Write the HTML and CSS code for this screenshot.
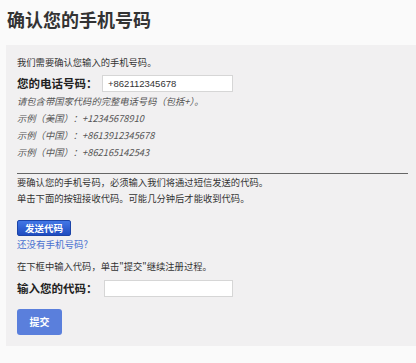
FILE: index.html
```html
<!DOCTYPE html>
<html lang="zh-CN">
<head>
<meta charset="utf-8">
<title>确认您的手机号码</title>
<link rel="stylesheet" href="styles.css">
</head>
<body>
<h1 class="title">确认您的手机号码</h1>
<div class="panel">
  <p class="line first">我们需要确认您输入的手机号码。</p>
  <div class="row">
    <span class="label">您的电话号码：</span>
    <span class="field">+862112345678</span>
  </div>
  <p class="hint">请包含带国家代码的完整电话号码（包括+）。</p>
  <p class="hint">示例（美国）：+12345678910</p>
  <p class="hint">示例（中国）：+8613912345678</p>
  <p class="hint">示例（中国）：+862165142543</p>
  <div class="rule"></div>
  <p class="line para">要确认您的手机号码，必须输入我们将通过短信发送的代码。</p>
  <p class="line para">单击下面的按钮接收代码。可能几分钟后才能收到代码。</p>
  <div class="send-wrap"><span class="send">发送代码</span></div>
  <a class="link">还没有手机号码?</a>
  <p class="line code-intro">在下框中输入代码，单击"提交"继续注册过程。</p>
  <div class="row code-row">
    <span class="label">输入您的代码：</span>
    <span class="field code-field"></span>
  </div>
  <div class="submit-wrap"><span class="submit">提交</span></div>
</div>
</body>
</html>
```

FILE: styles.css
```css
html, body {
  margin: 0;
  padding: 0;
  background: #fafafa;
}
body {
  font-family: "Noto Sans CJK SC", "Liberation Sans", sans-serif;
  color: #333;
  width: 416px;
  overflow: hidden;
}
.title {
  margin: 0;
  padding: 6px 0 0 7px;
  font-size: 18px;
  line-height: 26px;
  font-weight: bold;
  color: #333;
}
.panel {
  margin: 13px 0 0 6px;
  padding: 10px 8px 11px 11px;
  background: #f1f0f1;
}
.line {
  margin: 0;
  font-size: 9.3px;
  line-height: 14px;
  color: #333;
}
.row {
  display: flex;
  align-items: center;
  height: 20px;
  margin-top: 4px;
}
.label {
  font-size: 11.5px;
  font-weight: bold;
  color: #222;
  width: 85px;
  white-space: nowrap;
}
.field {
  box-sizing: border-box;
  width: 131px;
  height: 17px;
  background: #fff;
  border: 1px solid #d6d6d6;
  font-family: "Liberation Sans", sans-serif;
  font-size: 9.5px;
  line-height: 15px;
  padding-left: 5px;
  color: #333;
}
.hint {
  margin: 0;
  font-size: 9.3px;
  line-height: 17px;
  font-style: italic;
  color: #555;
}
.rule {
  margin-top: 12px;
  height: 1px;
  background: #666;
}
.para {
  line-height: 16px;
}
.para:first-of-type {
  margin-top: 1px;
}
.send-wrap {
  margin-top: 14px;
  display: flex;
}
.send {
  box-sizing: border-box;
  width: 54px;
  height: 16px;
  border-radius: 2px;
  background: linear-gradient(#4277e6, #1f4cc0);
  border: 1px solid #1c44a8;
  color: #fff;
  font-size: 9.5px;
  font-weight: bold;
  line-height: 14px;
  text-align: center;
}
.link {
  display: block;
  margin-top: 1px;
  font-size: 9.5px;
  line-height: 14px;
  color: #4a72d0;
}
.code-intro {
  margin-top: 8px;
}
.code-row {
  margin-top: 5px;
}
.label + .code-field {
  width: 129px;
  margin-left: 2px;
}
.submit-wrap {
  margin-top: 11px;
  display: flex;
}
.submit {
  width: 45px;
  height: 26px;
  border-radius: 3px;
  background: #5a7fdc;
  color: #fff;
  font-size: 10px;
  font-weight: bold;
  line-height: 26px;
  text-align: center;
}
```
